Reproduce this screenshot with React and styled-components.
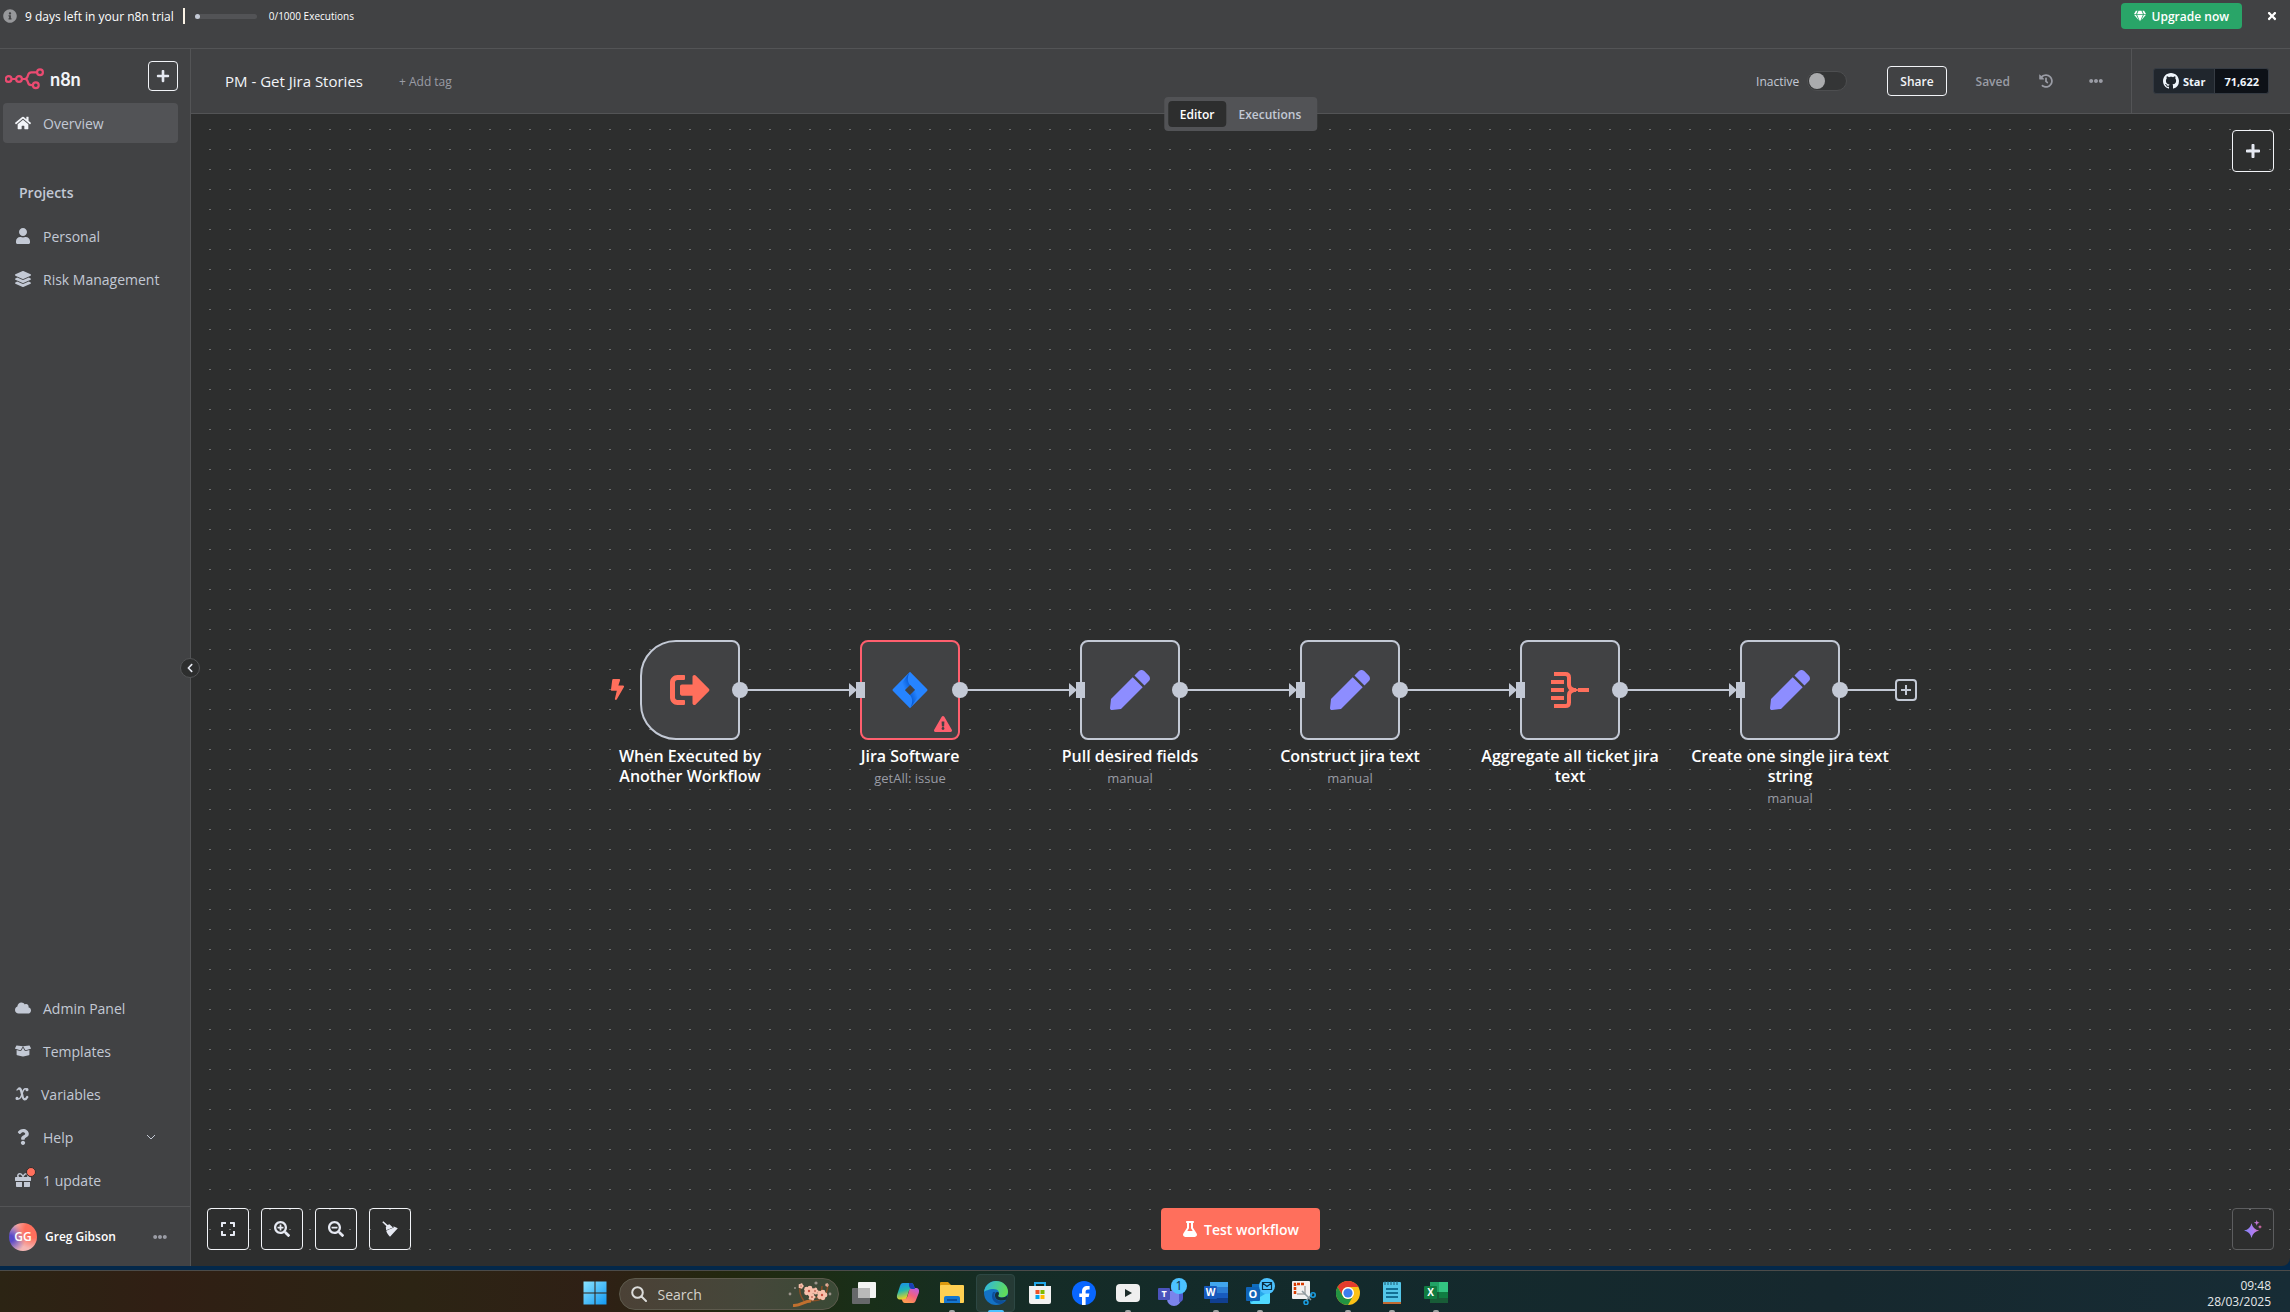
import React, { useState } from "react";
import styled, { createGlobalStyle, css } from "styled-components";
import {
  FaInfoCircle, FaHome, FaUser, FaLayerGroup, FaCloud, FaBoxOpen, FaQuestion, FaGift,
  FaGem, FaTimes, FaPlus, FaHistory, FaEllipsisH, FaExpand, FaSearchPlus, FaSearchMinus,
  FaFlask, FaBolt, FaPen, FaSignOutAlt, FaExclamationTriangle, FaChevronLeft,
} from "react-icons/fa";

const c = {
  canvas: "#2d2e2e",
  surface: "#414244",
  line: "#535456",
  active: "#525356",
  dot: "#6e6f70",
  text: "#c3c9d5",
  bright: "#f2f4f8",
  muted: "#9a9ca5",
  accent: "#ff6f5c",
  danger: "#ff5f6e",
  violet: "#8d8dff",
};

const GlobalStyle = createGlobalStyle`
  * { box-sizing: border-box; }
  body { margin: 0; background: ${c.canvas}; }
  body, button, input { font-family: "Open Sans", "Noto Sans", sans-serif; }
  button { cursor: pointer; margin: 0; }
  a { color: inherit; text-decoration: none; }
  h1, h2, p, ul { margin: 0; padding: 0; }
  svg { display: block; flex: none; }
`;

const Screen = styled.div`
  min-height: 100vh;
  display: flex;
  flex-direction: column;
  background: #03284a;
  color: ${c.text};
`;

const flexCenter = css`
  display: flex;
  align-items: center;
  justify-content: center;
`;

/* ---------- trial banner ---------- */

const Banner = styled.div`
  display: flex;
  align-items: center;
  height: 49px;
  padding: 0 13px 16px 3px;
  background: ${c.surface};
  border-bottom: 1px solid ${c.line};
  color: #fff;
  font-size: 12px;
`;

const BannerText = styled.span`
  margin: 0 9px 0 8px;
`;

const Divider = styled.span`
  width: 2px;
  height: 16px;
  background: #fbf3e6;
`;

const Meter = styled.span`
  width: 62px;
  height: 5px;
  margin: 0 12px 0 10px;
  border-radius: 3px;
  background: ${c.active};
`;

const MeterFill = styled.span`
  display: block;
  width: 5px;
  height: 5px;
  border-radius: 3px;
  background: ${c.text};
`;

const Quota = styled.span`
  font-size: 10px;
`;

const UpgradeButton = styled.button`
  ${flexCenter}
  gap: 6px;
  height: 26px;
  margin-left: auto;
  padding: 0 13px;
  border: 0;
  border-radius: 4px;
  background: #29a568;
  color: #fff;
  font-size: 12px;
  font-weight: 600;
`;

const PlainButton = styled.button`
  ${flexCenter}
  padding: 0;
  border: 0;
  background: none;
  color: ${(p) => p.$color || c.muted};
`;

const CloseButton = styled(PlainButton)`
  width: 10px;
  margin-left: 25px;
`;

/* ---------- sidebar ---------- */

const Body = styled.div`
  flex: 1;
  display: flex;
  margin-bottom: 4px;
`;

const Sidebar = styled.aside`
  position: relative;
  flex: none;
  display: flex;
  flex-direction: column;
  width: 191px;
  background: ${c.surface};
  border-right: 1px solid ${c.line};
`;

const Brand = styled.div`
  display: flex;
  align-items: center;
  padding: 12px 12px 12px 5px;
`;

const BrandLink = styled.a`
  flex: 1;
  display: flex;
  align-items: center;
  gap: 6px;
  padding-top: 6px;
  color: ${c.bright};
  font-family: Lato, "Open Sans", sans-serif;
  font-size: 18px;
  font-weight: 700;
  line-height: 20px;
`;

const OutlineButton = styled.button`
  ${flexCenter}
  flex: none;
  width: ${(p) => p.$size || 42}px;
  height: ${(p) => p.$size || 42}px;
  padding: 0;
  border: 1px solid ${(p) => (p.$quiet ? "#5c5d5f" : c.bright)};
  border-radius: 4px;
  background: transparent;
  color: #e6e9f2;
`;

const NavList = styled.ul`
  display: flex;
  flex-direction: column;
  gap: 3px;
  padding: 0 12px 0 3px;
  margin-top: ${(p) => (p.$bottom ? "auto" : "0")};
  margin-bottom: ${(p) => (p.$bottom ? "6px" : "0")};
  list-style: none;
`;

const NavLink = styled.a`
  display: flex;
  align-items: center;
  gap: 12px;
  height: 40px;
  padding: 0 22px 0 12px;
  border-radius: 4px;
  background: ${(p) => (p.$active ? c.active : "transparent")};
  font-size: 14px;
  white-space: nowrap;

  svg:first-child { color: ${(p) => (p.$active ? c.bright : c.text)}; }
  svg + span + svg { margin-left: auto; }
`;

const SectionTitle = styled.h2`
  margin: 30px 0 3px;
  padding-left: 19px;
  font-size: 14px;
  font-weight: 600;
  line-height: 40px;
`;

const IconWithDot = styled.span`
  position: relative;

  &::after {
    content: "";
    position: absolute;
    top: -5px;
    right: -5px;
    width: 8px;
    height: 8px;
    border: 1px solid ${c.canvas};
    border-radius: 50%;
    background: ${c.accent};
  }
`;

const UserRow = styled.div`
  display: flex;
  align-items: center;
  height: 60px;
  padding: 0 23px 0 9px;
  border-top: 1px solid ${c.line};
  color: #fff;
  font-size: 12px;
  font-weight: 600;
`;

const Avatar = styled.span`
  ${flexCenter}
  width: 28px;
  height: 28px;
  margin-right: 8px;
  border-radius: 50%;
  background:
    radial-gradient(circle at 85% 25%, #ff6f5c 25%, transparent 60%),
    radial-gradient(circle at 5% 55%, #5a4bc8 10%, transparent 50%),
    #f4b6b4;
`;

const UserName = styled.span`
  flex: 1;
`;

const CollapseButton = styled.button`
  ${flexCenter}
  position: absolute;
  right: -10px;
  top: 50%;
  width: 20px;
  height: 20px;
  padding: 0;
  border: 1px solid ${c.line};
  border-radius: 50%;
  background: ${c.canvas};
  color: #e6e9f2;
  z-index: 2;
`;

/* ---------- workflow header ---------- */

const Main = styled.main`
  position: relative;
  flex: 1;
  min-width: 0;
  display: flex;
  flex-direction: column;
`;

const Header = styled.header`
  display: flex;
  align-items: center;
  height: 65px;
  padding-left: 34px;
  background: ${c.surface};
  border-bottom: 1px solid ${c.line};
`;

const Title = styled.h1`
  color: ${c.bright};
  font-size: 15px;
  font-weight: 400;
`;

const AddTag = styled(PlainButton)`
  margin-left: 36px;
  font-size: 12px;
  font-weight: 500;
`;

const HeaderActions = styled.div`
  display: flex;
  align-items: center;
  gap: 29px;
  margin-left: auto;
  padding-right: 28px;
  font-size: 12px;
`;

const SwitchLabel = styled.label`
  display: flex;
  align-items: center;
  gap: 8px;
  margin-right: 11px;
  font-weight: 500;
`;

const Switch = styled.input`
  appearance: none;
  width: 40px;
  height: 20px;
  margin: 0;
  padding: 1px;
  border: 1px solid #4d4e50;
  border-radius: 10px;
  background: #343536;

  &::before {
    content: "";
    display: block;
    width: 16px;
    height: 16px;
    border-radius: 50%;
    background: #aaabad;
  }

  &:checked::before { margin-left: 20px; }
`;

const ShareButton = styled.button`
  height: 30px;
  padding: 0 12px;
  border: 1px solid ${c.bright};
  border-radius: 4px;
  background: transparent;
  color: ${c.bright};
  font-size: 12px;
  font-weight: 600;
`;

const Saved = styled.span`
  color: ${c.muted};
  font-weight: 600;
`;

const MoreButton = styled(PlainButton)`
  margin-left: 7px;
`;

const GithubArea = styled.div`
  display: flex;
  align-items: center;
  height: 64px;
  padding: 0 21px;
  border-left: 1px solid ${c.line};
`;

const GithubLink = styled.a`
  ${flexCenter}
  gap: 4px;
  height: 26px;
  padding: 0 9px;
  border: 1px solid #353b43;
  background: ${(p) => (p.$dark ? "#0d1117" : "#20262d")};
  border-radius: ${(p) => (p.$dark ? "0 3px 3px 0" : "3px 0 0 3px")};
  border-left-width: ${(p) => (p.$dark ? "0" : "1px")};
  color: #f0f6fc;
  font-size: 11px;
  font-weight: 700;
`;

const ViewTabs = styled.div`
  position: absolute;
  top: 48px;
  left: 50%;
  transform: translateX(-50%);
  display: flex;
  padding: 4px;
  border-radius: 4px;
  background: ${c.active};
  z-index: 2;
`;

const ViewTab = styled.button`
  height: 26px;
  padding: 0 12px;
  border: 0;
  border-radius: 4px;
  background: ${(p) => (p.$active ? c.canvas : "transparent")};
  color: ${(p) => (p.$active ? "#fff" : c.text)};
  font-size: 12px;
  font-weight: 600;
`;

/* ---------- canvas ---------- */

const Canvas = styled.section`
  position: relative;
  flex: 1;
  display: flex;
  flex-direction: column;
  justify-content: space-between;
  padding: 16px;
  border-bottom-right-radius: 8px;
  overflow: hidden;
  background: ${c.canvas};

  &::before {
    content: "";
    position: absolute;
    inset: 15px 0 0 18px;
    background: ${c.dot};
    mask: linear-gradient(90deg, #000 2px, transparent 2px) 0 0 / 20px 20px,
      linear-gradient(#000 1px, transparent 1px) 0 0 / 20px 20px;
    mask-composite: intersect;
  }
`;

const CanvasBar = styled.div`
  position: relative;
  display: grid;
  grid-template-columns: 1fr auto 1fr;
  align-items: center;
`;

const ButtonGroup = styled.div`
  display: flex;
  gap: 12px;
`;

const BarEnd = styled.div`
  grid-column: 3;
  justify-self: end;
`;

const RunButton = styled.button`
  ${flexCenter}
  gap: 6px;
  height: 42px;
  padding: 0 21px;
  border: 0;
  border-radius: 4px;
  background: ${c.accent};
  color: #fff;
  font-size: 14px;
  font-weight: 600;
`;

const Node = styled.article`
  position: absolute;
  left: ${(p) => p.$x}px;
  top: ${(p) => p.$y}px;
`;

const NodeBox = styled.div`
  ${flexCenter}
  position: relative;
  width: 100px;
  height: 100px;
  border: 2px solid ${(p) => (p.$error ? c.danger : c.text)};
  border-radius: ${(p) => (p.$trigger ? "36px 8px 8px 36px" : "8px")};
  background: ${c.surface};
  color: ${(p) => p.$color};
`;

const TriggerMark = styled.span`
  position: absolute;
  right: 112px;
  top: 39px;
  color: ${c.accent};
`;

const ErrorMark = styled.span`
  position: absolute;
  right: 6px;
  bottom: 5px;
  color: ${c.danger};
`;

const Wire = styled.span`
  position: absolute;
  left: 92px;
  top: ${(p) => (p.$end ? 38 : 41)}px;
  z-index: 1;
`;

const NodeCaption = styled.div`
  position: absolute;
  top: 106px;
  left: -50px;
  width: 200px;
  text-align: center;
`;

const NodeName = styled.p`
  color: #fff;
  font-size: 16px;
  font-weight: 600;
  line-height: 20px;
`;

const NodeInfo = styled.p`
  margin-top: 4px;
  color: ${c.muted};
  font-size: 13px;
  line-height: 16px;
`;

/* ---------- desktop task bar ---------- */

const Taskbar = styled.footer`
  display: grid;
  grid-template-columns: 1fr auto 1fr 262px;
  align-items: center;
  height: 42px;
  padding: 0 19px;
  border-top: 1px solid #4b4b49;
  background: linear-gradient(90deg, #2c2414 0, #301f14 7%, #2c2414 18%, #2f2015 26%, #22280f 32%, #192f19 38%, #152c26 44%, #132a2c 58%, #16282e 80%, #172c35 100%);
`;

const TaskItems = styled.nav`
  grid-column: 2;
  display: flex;
  align-items: center;
`;

const TaskButton = styled.button`
  ${flexCenter}
  position: relative;
  width: ${(p) => (p.$start ? 48 : 44)}px;
  height: 41px;
  padding: 2px 0 0;
  border: 0;
  background: none;

  &::before {
    content: "";
    display: ${(p) => (p.$active ? "block" : "none")};
    position: absolute;
    inset: 3px 3px 0 2px;
    border: 1px solid #2d4743;
    border-radius: 4px;
    background: rgba(255, 255, 255, 0.07);
  }

  &::after {
    content: "";
    display: ${(p) => (p.$open || p.$active ? "block" : "none")};
    position: absolute;
    bottom: 0;
    width: ${(p) => (p.$active ? 16 : 6)}px;
    height: 2px;
    border-radius: 2px 2px 0 0;
    background: ${(p) => (p.$active ? "#4cc2ff" : "#a0a4a4")};
  }

  svg { position: relative; }
`;

const TaskSearch = styled.label`
  display: flex;
  align-items: center;
  gap: 11px;
  width: 220px;
  height: 32px;
  margin: 5px 3px 0 0;
  padding: 0 6px 0 11px;
  border: 1px solid #5d5a4d;
  border-radius: 16px;
  background: linear-gradient(90deg, #4b4136, #45473a 60%, #3b4a36);
`;

const TaskInput = styled.input`
  flex: 1;
  min-width: 0;
  padding: 0;
  border: 0;
  outline: 0;
  background: none;
  color: #fff;
  font-size: 14px;
  &::placeholder { color: #d5d2cc; opacity: 1; }
`;

const Clock = styled.time`
  grid-column: 4;
  padding-top: 5px;
  color: #e4e8ea;
  font-size: 12px;
  line-height: 16px;
  text-align: right;
`;

/* ---------- drawings ---------- */

const N8nLogo = () => (
  <svg width="39" height="22" viewBox="0 0 39 22" fill="none" stroke="#ea4b71" strokeWidth="2.2" aria-hidden="true">
    <circle cx="3.6" cy="11" r="2.9" />
    <circle cx="14" cy="11" r="2.9" />
    <circle cx="35" cy="4.3" r="2.9" />
    <circle cx="30.8" cy="17.2" r="2.9" />
    <path d="M6.5 11H11M17 11h2.6c2.8 0 2.8-1.6 3.3-3.6.5-2.1 1.4-3.1 3.6-3.1H32M19.6 11c2.8 0 2.8 1.4 3.3 3.2.5 2.1 1.4 3 3.6 3H28" />
  </svg>
);

const VariableIcon = () => (
  <svg width="14" height="14" viewBox="0 0 14 14" fill="none" stroke="currentColor" strokeLinecap="round" aria-hidden="true">
    <path d="M4 1.600C7.500.8 6.500 12.800 9.600 12.300c1.300-.2 2.100-1 2.600-2.200" strokeWidth="2.400" />
    <path d="M2 3c.5-.8 1.200-1.300 2-1.400M12 2.200C8.500.5 7.800 4.500 7 7s-2.200 6.200-5 4.500" strokeWidth="1.400" />
    <path d="M12 2.600v.1M2 11.300v.1" strokeWidth="3" />
  </svg>
);

const GithubMark = () => (
  <svg width="16" height="16" viewBox="0 0 16 16" fill="currentColor" aria-hidden="true">
    <path d="M8 0C3.58 0 0 3.58 0 8c0 3.54 2.29 6.53 5.47 7.59.4.07.55-.17.55-.38 0-.19-.01-.82-.01-1.49-2.01.37-2.53-.49-2.69-.94-.09-.23-.48-.94-.82-1.13-.28-.15-.68-.52-.01-.53.63-.01 1.08.58 1.23.82.72 1.21 1.87.87 2.33.66.07-.52.28-.87.51-1.07-1.78-.2-3.64-.89-3.64-3.95 0-.87.31-1.59.82-2.15-.08-.2-.36-1.02.08-2.12 0 0 .67-.21 2.2.82.64-.18 1.32-.27 2-.27.68 0 1.36.09 2 .27 1.53-1.04 2.2-.82 2.2-.82.44 1.1.16 1.92.08 2.12.51.56.82 1.27.82 2.15 0 3.07-1.87 3.75-3.65 3.95.29.25.54.73.54 1.48 0 1.07-.01 1.93-.01 2.2 0 .21.15.46.55.38A8.013 8.013 0 0016 8c0-4.42-3.58-8-8-8z" />
  </svg>
);

const ChevronDown = () => (
  <svg width="10" height="10" viewBox="0 0 10 10" fill="none" stroke={c.text} aria-hidden="true">
    <path d="M1 3l4 4 4-4" />
  </svg>
);

const BroomIcon = () => (
  <svg width="16" height="16" viewBox="0 0 16 16" fill="currentColor" aria-hidden="true">
    <path d="M.3 1.2L1.3.2 5.6 3.9 7.4 3.2 11 6.6 4.2 9.2 3.8 6.2 4.4 5.2z" />
    <path d="M11.3 5.2L15.8 7.3 8 15.8C6 13.7 4.7 11.8 4.2 9.7L11.8 6.6z" />
  </svg>
);

const SparkleIcon = () => (
  <svg width="18" height="18" viewBox="0 0 18 18" aria-hidden="true">
    <defs>
      <linearGradient id="spark" x1="0" y1="0" x2="1" y2="0">
        <stop offset="0" stopColor="#7f84f5" />
        <stop offset=".55" stopColor="#b37cf0" />
        <stop offset="1" stopColor="#e0669b" />
      </linearGradient>
    </defs>
    <path fill="url(#spark)" d="M7.500 3.200Q8.900 9.300 15.200 10.600 8.900 11.900 7.500 18 6.200 11.900 0 10.600 6.200 9.300 7.500 3.200zM12.700 0l.8 2.100 2.100.7-2.100.8-.8 2.100-.7-2.100-2.200-.8 2.200-.7zM16 5l.7 1.300 1.300.6-1.300.6L16 8.800l-.7-1.300-1.300-.6 1.300-.6z" />
  </svg>
);

const JiraIcon = () => (
  <svg width="36" height="38" viewBox="0 0 36 38" aria-hidden="true">
    <defs>
      <linearGradient id="jiraA" x1="1" y1=".3" x2=".3" y2=".8">
        <stop offset="0" stopColor="#0052cc" />
        <stop offset="1" stopColor="#2684ff" />
      </linearGradient>
      <linearGradient id="jiraB" x1="0" y1=".7" x2=".7" y2=".2">
        <stop offset="0" stopColor="#0052cc" />
        <stop offset="1" stopColor="#2684ff" />
      </linearGradient>
    </defs>
    <path fill="#2684ff" fillRule="evenodd" d="M18 .8L35 18a1.400 1.400 0 0 1 0 2L18 37.200 1 20a1.400 1.400 0 0 1 0-2zM18 13.800L12.800 19l5.200 5.200 5.200-5.200z" />
    <path fill="url(#jiraA)" d="M18 13.800C15.200 10.900 15.200 6 17.600 1.200L8.200 14.400 12.800 19z" />
    <path fill="url(#jiraB)" d="M18 24.200c2.800 2.900 2.800 7.800.4 12.600l9.400-13.200L23.200 19z" />
  </svg>
);

const AggregateIcon = () => (
  <svg width="40" height="36" viewBox="0 0 40 36" fill="none" stroke="currentColor" strokeWidth="4" aria-hidden="true">
    <path d="M4 2h11.500c2.500 0 3.500 1.500 3.500 3.500v7.500c0 2.500 1.500 4 4.500 5-3 1-4.500 2.500-4.500 5v7.500c0 2-1 3.500-3.500 3.500H4M1 10h13M1 18h13M1 26h13M23 18h3M28 18h11" />
  </svg>
);

const WireDrawing = () => (
  <svg width="138" height="18" viewBox="0 0 138 18" fill={c.text} aria-hidden="true">
    <circle cx="8" cy="9" r="8" />
    <path d="M8 8h112v2H8zM117 2l8 7-8 7zM124 1h9v16h-9z" />
  </svg>
);

const EndWireDrawing = () => (
  <svg width="88" height="24" viewBox="0 0 88 24" fill={c.text} aria-hidden="true">
    <circle cx="8" cy="12" r="8" />
    <path d="M8 11h55v2H8zM73 7h2v10h-2zM69 11h10v2H69z" />
    <rect x="64" y="2" width="20" height="20" rx="3" fill="none" stroke={c.text} strokeWidth="2" />
  </svg>
);

const Icon24 = ({ children }) => (
  <svg width="24" height="24" viewBox="0 0 24 24" aria-hidden="true">{children}</svg>
);

const SearchGlass = () => (
  <svg width="16" height="16" viewBox="0 0 16 16" fill="none" stroke="#dcdcda" strokeWidth="2" strokeLinecap="round" aria-hidden="true">
    <circle cx="6.500" cy="6.500" r="5.300" />
    <path d="M10.500 10.500L15 15" />
  </svg>
);

const petal = [0, 72, 144, 216, 288];
const Blossom = () => (
  <svg width="44" height="26" viewBox="0 0 44 26" aria-hidden="true">
    <path d="M16 21c6-3 12 1 19-4 4-3 4-9 5-13M16 20c-3-4-5-8-4-13M28 17c4-2 6-7 6-12" fill="none" stroke="#8a4f26" strokeWidth="1.500" />
    <path d="M5 24.500C13 25 16 20 23 20" fill="none" stroke="#c0702f" strokeWidth="3" />
    {[[21, 10, 3], [34, 14, 3], [27, 10, 2], [24, 16, 2], [13, 5, 1.500], [39, 4, 1]].map(([x, y, r]) => (
      <g key={`${x}-${y}`}>
        {petal.map((a) => (
          <circle key={a} cx={x + r * Math.cos((a * Math.PI) / 180)} cy={y + r * Math.sin((a * Math.PI) / 180)} r={r * 0.8} fill="#f8c0ab" />
        ))}
        <circle cx={x} cy={y} r={r * 0.4} fill="#c8503f" />
      </g>
    ))}
    <g fill="#9a938a"><circle cx="2" cy="13" r="1.400" /><circle cx="28" cy="2" r="1.600" /><circle cx="42" cy="13" r="1.400" /><circle cx="7" cy="7" r="1" /></g>
  </svg>
);

const WindowsIcon = () => (
  <Icon24>
    <defs>
      <linearGradient id="win" x1="0" y1="0" x2="1" y2="1">
        <stop offset="0" stopColor="#8be4ff" />
        <stop offset="1" stopColor="#1298f2" />
      </linearGradient>
    </defs>
    <path fill="url(#win)" d="M.5.5h11v11H.5zM12.500.5h11v11h-11zM.5 12.500h11v11H.5zM12.500 12.500h11v11h-11z" />
  </Icon24>
);

const TaskViewIcon = () => (
  <Icon24>
    <rect x="6" y="1" width="18" height="16" rx="1" fill="#f4f4f4" />
    <rect x="0" y="7" width="18" height="16" rx="1" fill="#66686a" />
    <path d="M6 7h12v10H6z" fill="#b9b9b9" />
  </Icon24>
);

const CopilotIcon = () => (
  <Icon24>
    <defs>
      <linearGradient id="copA" x1="0" y1="0" x2=".3" y2="1">
        <stop offset="0" stopColor="#1a8cf0" /><stop offset=".5" stopColor="#22b6b0" /><stop offset="1" stopColor="#f2d41c" />
      </linearGradient>
      <linearGradient id="copB" x1="1" y1="0" x2=".4" y2="1">
        <stop offset="0" stopColor="#b45cf2" /><stop offset=".55" stopColor="#f2617e" /><stop offset="1" stopColor="#ff9a52" />
      </linearGradient>
    </defs>
    <path fill="url(#copA)" d="M7 2h8c2 0 2.500 1.500 3 3l1 3h-3c-2 0-3 1-3.500 3l-1.500 5c-.6 2-1.500 2.500-3 2.500H4C1 18.500.5 16 1.200 13.500L4 5c.6-2 1.500-3 3-3z" />
    <path fill="url(#copB)" d="M17 22H9c-2 0-2.500-1.500-3-3l-.5-1H8c2 0 3-1 3.500-3l1.500-5c.6-2 1.500-3 3-3h4c3 0 3.500 2.500 2.800 5L20 19c-.6 2-1.500 3-3 3z" />
    <path fill="#1b3fb5" d="M13 2h2c2 0 2.500 1.500 3 3l1 3h-3c-1.500 0-2.500-1-3-3z" />
  </Icon24>
);

const FolderIcon = () => (
  <Icon24>
    <path fill="#dd9a0e" d="M0 2a1 1 0 0 1 1-1h7l3 3v4H0z" />
    <rect x="0" y="4" width="24" height="18" rx="1" fill="#ffd052" />
    <path d="M4 22v-5a2 2 0 0 1 2-2h12a2 2 0 0 1 2 2v5z" fill="#1477d1" />
    <path d="M7 18h10v2H7z" fill="#0b4f9c" />
  </Icon24>
);

const EdgeIcon = () => (
  <Icon24>
    <defs>
      <linearGradient id="edgeA" x1="0" y1="0" x2="1" y2=".3">
        <stop offset="0" stopColor="#2cb4ea" /><stop offset="1" stopColor="#5fdc5c" />
      </linearGradient>
    </defs>
    <circle cx="12" cy="12" r="12" fill="#1372c4" />
    <path fill="url(#edgeA)" d="M0 11C1 4 6 0 12 0c7 0 12 5 12 10.500 0 4-3 6-6 6-3 0-4.500-1-3.500-2.500C16 11 14 8 9.500 8 5 8 1 10 0 11z" />
    <path fill="#0d4f9a" d="M9 11c-3 6 1 12 8 12 2-.5 4-2 5.500-4-5 2-11 1-12-4-.3-2 .2-3 1-4z" />
    <path fill="#15313a" d="M14.500 14c-1 1.500.5 2.500 3.500 2.500 2.500 0 4.500-1 5.500-2.800 0 1.800-.4 3.300-1 4.800-5 2-11 1-11.500-3.500-.2-2.500 1-4 2.500-4 1.500 0 2 1.600 1 3z" />
  </Icon24>
);

const StoreIcon = () => (
  <Icon24>
    <path d="M7 7V2h10v5" fill="none" stroke="#22a7e8" strokeWidth="2" />
    <path d="M1 5h22v16a2 2 0 0 1-2 2H3a2 2 0 0 1-2-2z" fill="#f2f2f2" />
    <path fill="#f05125" d="M7.500 9h4v4h-4z" /><path fill="#7fba00" d="M12.500 9h4v4h-4z" />
    <path fill="#00a4ef" d="M7.500 14h4v4h-4z" /><path fill="#ffb900" d="M12.500 14h4v4h-4z" />
  </Icon24>
);

const FacebookIcon = () => (
  <Icon24>
    <circle cx="12" cy="12" r="12" fill="#0866ff" />
    <path fill="#fff" d="M10 24v-8H7.300v-3.600H10v-1.600c0-4 1.800-5.900 5.600-5.900.7 0 1.400.1 2 .2v3.300h-1.500c-1.900 0-2.500.9-2.500 2.600v1.400h3.800l-.7 3.600h-3.100v8z" />
  </Icon24>
);

const YoutubeIcon = () => (
  <Icon24>
    <rect x="0" y="3" width="24" height="18" rx="4" fill="#efefef" />
    <path d="M9 8l7 4-7 4z" fill="#1c2c2a" />
  </Icon24>
);

const Letter = styled.text`
  font-family: "Open Sans", sans-serif;
  font-weight: 700;
  fill: #fff;
  text-anchor: middle;
`;

const TeamsIcon = () => (
  <svg width="30" height="30" viewBox="0 0 30 30" aria-hidden="true">
    <circle cx="18" cy="10" r="4" fill="#7b83eb" />
    <path d="M10 13h14v8a7 7 0 0 1-14 0z" fill="#7b83eb" />
    <path d="M22 14h4v6a4 4 0 0 1-4 4z" fill="#5059c9" />
    <rect x="1" y="10" width="12" height="12" rx="1" fill="#4b53bc" />
    <Letter x="7" y="19" fontSize="9">T</Letter>
    <circle cx="22" cy="8" r="8" fill="#4cc2ff" />
    <text x="22" y="12" fontSize="12" textAnchor="middle" fill="#0c2c3f" fontFamily="Open Sans, sans-serif">1</text>
  </svg>
);

const WordIcon = () => (
  <Icon24>
    <path d="M6 1h18v6H6z" fill="#41a5ee" /><path d="M6 6h18v6H6z" fill="#2b7cd3" />
    <path d="M6 12h18v5H6z" fill="#185abd" /><path d="M6 17h18v5H6z" fill="#103f91" />
    <rect x="0" y="5" width="13" height="13" rx="1" fill="#185abd" />
    <Letter x="6.500" y="15" fontSize="10">W</Letter>
  </Icon24>
);

const OutlookIcon = () => (
  <svg width="30" height="30" viewBox="0 0 30 30" aria-hidden="true">
    <path d="M7 6h14v14H7z" fill="#0f6cbd" /><path d="M5 13l20-1v12a2 2 0 0 1-2 2H7a2 2 0 0 1-2-2z" fill="#28a8ea" />
    <path d="M5 25l20-12v11a2 2 0 0 1-2 2H7z" fill="#50d9ff" />
    <rect x="1" y="9" width="14" height="14" rx="1" fill="#0f64b8" />
    <Letter x="8" y="20" fontSize="11">O</Letter>
    <circle cx="22" cy="8" r="8" fill="#4cc2ff" />
    <path d="M17.500 4.500h9v7h-9zM17.500 5l4.500 3.500L26.500 5" fill="none" stroke="#0c2c3f" strokeWidth="1.200" />
  </svg>
);

const SnipIcon = () => (
  <Icon24>
    <rect x="0" y="0" width="18" height="18" rx="1" fill="#f1f1f1" />
    <path d="M3 13V3h10" fill="none" stroke="#d83b01" strokeWidth="2.500" strokeDasharray="3 1" />
    <path d="M13 5v8H5" fill="none" stroke="#b8b8b8" strokeWidth="2" />
    <path d="M10 10l9 9M14 20l6-7" stroke="#8c9aa0" strokeWidth="1.500" />
    <circle cx="21" cy="14" r="2.200" fill="none" stroke="#1a9de0" strokeWidth="1.600" />
    <circle cx="14" cy="21.500" r="2" fill="none" stroke="#1a9de0" strokeWidth="1.600" />
  </Icon24>
);

const ChromeIcon = () => (
  <Icon24>
    <circle cx="12" cy="12" r="12" fill="#fbc116" />
    <path fill="#e33b2e" d="M1.600 6a12 12 0 0 1 20.800 0H12a6 6 0 0 0-5.200 9z" />
    <path fill="#229342" d="M1.600 6l5.200 9A6 6 0 0 0 12 18c2 0 3.500-.8 4.700-2.200L12 24A12 12 0 0 1 1.600 6z" />
    <circle cx="12" cy="12" r="6" fill="#fff" /><circle cx="12" cy="12" r="4.600" fill="#3b7ded" />
  </Icon24>
);

const NotepadIcon = () => (
  <Icon24>
    <rect x="3" y="1" width="18" height="21" rx="1" fill="#54c6e8" />
    <path d="M3 21h18v2H3z" fill="#c06a32" />
    <path d="M6 8h12M6 12h12M6 16h12" stroke="#136f94" strokeWidth="2" />
    <path d="M5 0v4M8 0v4M11 0v4M14 0v4M17 0v4" stroke="#1b5871" />
  </Icon24>
);

const ExcelIcon = () => (
  <Icon24>
    <path d="M6 1h9v10H6z" fill="#21a366" /><path d="M15 1h9v10h-9z" fill="#33c481" />
    <path d="M6 11h9v11H6z" fill="#185c37" /><path d="M15 11h9v6h-9z" fill="#107c41" /><path d="M15 17h9v5h-9z" fill="#185c37" />
    <rect x="0" y="5" width="13" height="13" rx="1" fill="#107c41" />
    <Letter x="6.500" y="15" fontSize="10">X</Letter>
  </Icon24>
);

/* ---------- data ---------- */

const nodes = [
  { name: "When Executed by Another Workflow", icon: <FaSignOutAlt size={40} />, color: c.accent, trigger: true },
  { name: "Jira Software", info: "getAll: issue", icon: <JiraIcon />, error: true },
  { name: "Pull desired fields", info: "manual", icon: <FaPen size={40} />, color: c.violet },
  { name: "Construct jira text", info: "manual", icon: <FaPen size={40} />, color: c.violet },
  { name: "Aggregate all ticket jira text", icon: <AggregateIcon />, color: c.accent },
  { name: "Create one single jira text string", info: "manual", icon: <FaPen size={40} />, color: c.violet },
];

const FLOW_ORIGIN = { x: 449, y: 526, step: 220 };

const taskApps = [
  ["Task view", TaskViewIcon],
  ["Copilot", CopilotIcon],
  ["File Explorer", FolderIcon, "open"],
  ["Edge", EdgeIcon, "active"],
  ["Store", StoreIcon],
  ["Facebook", FacebookIcon],
  ["YouTube", YoutubeIcon, "open"],
  ["Teams", TeamsIcon],
  ["Word", WordIcon, "open"],
  ["Outlook", OutlookIcon, "open"],
  ["Snipping Tool", SnipIcon],
  ["Chrome", ChromeIcon, "open"],
  ["Notepad", NotepadIcon, "open"],
  ["Excel", ExcelIcon, "open"],
];

export default function App() {
  const [view, setView] = useState("Editor");

  return (
    <Screen>
      <GlobalStyle />
      <Banner>
        <FaInfoCircle size={14} color="#97989b" />
        <BannerText>9 days left in your n8n trial</BannerText>
        <Divider />
        <Meter><MeterFill /></Meter>
        <Quota>0/1000 Executions</Quota>
        <UpgradeButton><FaGem size={12} />Upgrade now</UpgradeButton>
        <CloseButton $color="#fff" aria-label="Close banner"><FaTimes size={12} /></CloseButton>
      </Banner>

      <Body>
        <Sidebar>
          <Brand>
            <BrandLink href="#home"><N8nLogo />n8n</BrandLink>
            <OutlineButton $size={30} aria-label="Create"><FaPlus size={14} /></OutlineButton>
          </Brand>
          <NavList>
            <li><NavLink href="#overview" $active><FaHome size={16} /><span>Overview</span></NavLink></li>
          </NavList>
          <SectionTitle>Projects</SectionTitle>
          <NavList>
            <li><NavLink href="#personal"><FaUser size={16} /><span>Personal</span></NavLink></li>
            <li><NavLink href="#risk"><FaLayerGroup size={16} /><span>Risk Management</span></NavLink></li>
          </NavList>
          <NavList $bottom>
            <li><NavLink href="#admin"><FaCloud size={16} /><span>Admin Panel</span></NavLink></li>
            <li><NavLink href="#templates"><FaBoxOpen size={16} /><span>Templates</span></NavLink></li>
            <li><NavLink href="#variables"><VariableIcon /><span>Variables</span></NavLink></li>
            <li><NavLink href="#help"><FaQuestion size={16} /><span>Help</span><ChevronDown /></NavLink></li>
            <li><NavLink href="#updates"><IconWithDot><FaGift size={16} /></IconWithDot><span>1 update</span></NavLink></li>
          </NavList>
          <UserRow>
            <Avatar>GG</Avatar>
            <UserName>Greg Gibson</UserName>
            <PlainButton aria-label="User menu"><FaEllipsisH size={14} /></PlainButton>
          </UserRow>
          <CollapseButton aria-label="Collapse sidebar"><FaChevronLeft size={10} /></CollapseButton>
        </Sidebar>

        <Main>
          <Header>
            <Title>PM - Get Jira Stories</Title>
            <AddTag>+ Add tag</AddTag>
            <HeaderActions>
              <SwitchLabel>Inactive<Switch type="checkbox" /></SwitchLabel>
              <ShareButton>Share</ShareButton>
              <Saved>Saved</Saved>
              <PlainButton aria-label="History"><FaHistory size={14} /></PlainButton>
              <MoreButton aria-label="More"><FaEllipsisH size={14} /></MoreButton>
            </HeaderActions>
            <GithubArea>
              <GithubLink href="#star"><GithubMark />Star</GithubLink>
              <GithubLink href="#stargazers" $dark>71,622</GithubLink>
            </GithubArea>
          </Header>
          <ViewTabs>
            {["Editor", "Executions"].map((name) => (
              <ViewTab key={name} $active={view === name} onClick={() => setView(name)}>{name}</ViewTab>
            ))}
          </ViewTabs>

          <Canvas>
            {nodes.map((node, i) => (
              <Node key={node.name} $x={FLOW_ORIGIN.x + i * FLOW_ORIGIN.step} $y={FLOW_ORIGIN.y}>
                {node.trigger && <TriggerMark><FaBolt size={21} /></TriggerMark>}
                <NodeBox $trigger={node.trigger} $error={node.error} $color={node.color}>
                  {node.icon}
                  {node.error && <ErrorMark><FaExclamationTriangle size={18} /></ErrorMark>}
                </NodeBox>
                {i < nodes.length - 1 ? <Wire><WireDrawing /></Wire> : <Wire $end><EndWireDrawing /></Wire>}
                <NodeCaption>
                  <NodeName>{node.name}</NodeName>
                  {node.info && <NodeInfo>{node.info}</NodeInfo>}
                </NodeCaption>
              </Node>
            ))}

            <CanvasBar>
              <BarEnd><OutlineButton aria-label="Add node"><FaPlus size={16} /></OutlineButton></BarEnd>
            </CanvasBar>
            <CanvasBar>
              <ButtonGroup>
                <OutlineButton aria-label="Fit view"><FaExpand size={16} /></OutlineButton>
                <OutlineButton aria-label="Zoom in"><FaSearchPlus size={16} /></OutlineButton>
                <OutlineButton aria-label="Zoom out"><FaSearchMinus size={16} /></OutlineButton>
                <OutlineButton aria-label="Tidy up"><BroomIcon /></OutlineButton>
              </ButtonGroup>
              <RunButton><FaFlask size={16} />Test workflow</RunButton>
              <BarEnd><OutlineButton $quiet aria-label="Assistant"><SparkleIcon /></OutlineButton></BarEnd>
            </CanvasBar>
          </Canvas>
        </Main>
      </Body>

      <Taskbar>
        <TaskItems>
          <TaskButton $start aria-label="Start"><WindowsIcon /></TaskButton>
          <TaskSearch>
            <SearchGlass />
            <TaskInput type="search" placeholder="Search" aria-label="Search" />
            <Blossom />
          </TaskSearch>
          {taskApps.map(([name, AppIcon, state]) => (
            <TaskButton key={name} aria-label={name} $open={state === "open"} $active={state === "active"}>
              <AppIcon />
            </TaskButton>
          ))}
        </TaskItems>
        <Clock>09:48<br />28/03/2025</Clock>
      </Taskbar>
    </Screen>
  );
}
